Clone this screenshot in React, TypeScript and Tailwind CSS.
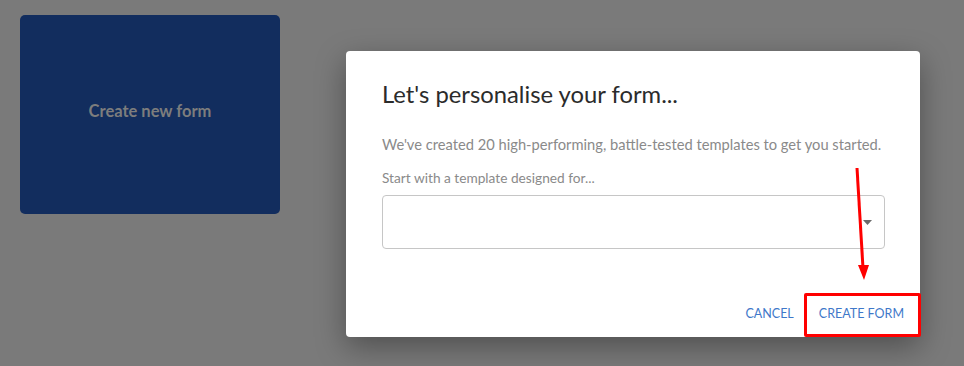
import React from 'react';

const font = { fontFamily: 'Lato, "Noto Sans", sans-serif' };

export default function App() {
  return (
    <div className="relative w-[964px] h-[366px] overflow-hidden bg-[#7a7a7a] flex items-start" style={font}>
      <div className="ml-5 mt-[15px] w-[260px] h-[199px] rounded-[5px] bg-[#122d5e] flex items-center justify-center pb-[6px]">
        <span className="text-[16.5px] font-bold text-[#7d7d7d]">Create new form</span>
      </div>

      <div className="ml-[66px] mt-[51px] w-[574px] h-[286px] rounded-[4px] bg-white shadow-[0_10px_30px_rgba(0,0,0,0.35)] flex flex-col pt-[27px]">
        <div className="pl-9 pr-[35px] flex flex-col">
          <h2 className="text-[23.8px] leading-[32px] text-[#2b2b2b]">Let's personalise your form...</h2>
          <p className="mt-[24px] text-[14.7px] leading-[20px] text-[#8a8a8a]">
            We've created 20 high-performing, battle-tested templates to get you started.
          </p>
          <label className="mt-[15px] text-[13.7px] leading-[18px] text-[#8a8a8a]">Start with a template designed for...</label>
          <div className="mt-[8px] h-[54px] rounded-[4px] border border-[#c6c6c6] flex items-center justify-end pr-[12px]">
            <svg width="9" height="5" viewBox="0 0 9 5">
              <path d="M0 0h9L4.5 5z" fill="#6b6b6b" />
            </svg>
          </div>
        </div>
        <div className="mt-auto mb-[13px] flex justify-end items-center gap-[25px] pr-[16px]">
          <button className="text-[12.5px] text-[#3f78c9] uppercase">Cancel</button>
          <button className="text-[12.5px] text-[#3f78c9] uppercase">Create form</button>
        </div>
      </div>

      {/* annotation: red box + arrow */}
      <div className="absolute left-[804px] top-[293px] w-[117px] h-[44px] border-[3px] border-[#ff0000] rounded-[2px]" />
      <svg className="absolute left-0 top-0" width="964" height="366">
        <line x1="857" y1="168" x2="863" y2="268" stroke="#ff0000" strokeWidth="3" />
        <path d="M858 265 L869 265 L864 280 Z" fill="#ff0000" />
      </svg>
    </div>
  );
}
